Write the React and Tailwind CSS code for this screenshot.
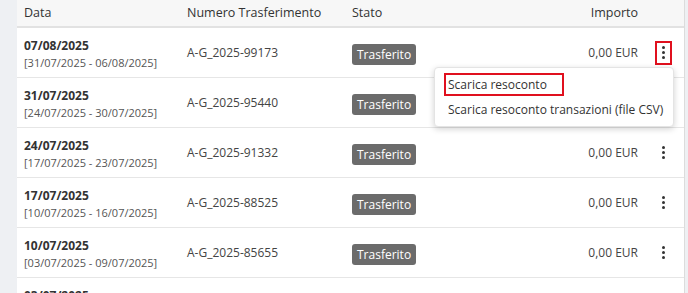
const rows = [
  { date: "07/08/2025", range: "[31/07/2025 - 06/08/2025]", num: "A-G_2025-99173", open: true },
  { date: "31/07/2025", range: "[24/07/2025 - 30/07/2025]", num: "A-G_2025-95440" },
  { date: "24/07/2025", range: "[17/07/2025 - 23/07/2025]", num: "A-G_2025-91332" },
  { date: "17/07/2025", range: "[10/07/2025 - 16/07/2025]", num: "A-G_2025-88525" },
  { date: "10/07/2025", range: "[03/07/2025 - 09/07/2025]", num: "A-G_2025-85655" },
  { date: "03/07/2025", range: "[26/06/2025 - 02/07/2025]", num: "A-G_2025-82011" },
];

function Kebab({ active }) {
  return (
    <div
      className={
        "flex h-[24px] w-[17px] flex-col items-center justify-center gap-[2px] " +
        (active ? "border-2 border-[#e0101e]" : "border-2 border-transparent")
      }
    >
      <span className="h-[3px] w-[3px] rounded-full bg-[#333]" />
      <span className="h-[3px] w-[3px] rounded-full bg-[#333]" />
      <span className="h-[3px] w-[3px] rounded-full bg-[#333]" />
    </div>
  );
}

export default function App() {
  return (
    <div
      className="flex h-[293px] w-[688px] overflow-hidden bg-[#eef0f3] text-[#333]"
      style={{ fontFamily: '"Open Sans", "Noto Sans", sans-serif' }}
    >
      <div className="w-[17px] shrink-0 bg-[#eef0f3]" />
      <div className="relative w-[667px] shrink-0 bg-white">
        {/* Header */}
        <div className="flex h-[28px] items-center border-b-2 border-[#e2e2e2] bg-[#f7f7f7] pl-[7px] text-[12.5px]">
          <div className="w-[163px]">Data</div>
          <div className="w-[165px]">Numero Trasferimento</div>
          <div className="flex-1">Stato</div>
          <div className="w-[100px] text-right">Importo</div>
          <div className="w-[46px]" />
        </div>

        {rows.map((r, i) => (
          <div key={i} className="relative flex h-[50px] items-center border-b border-[#e6e6e6] pl-[7px]">
            <div className="w-[163px] pt-[2px]">
              <div className="text-[12px] font-bold leading-[17px]">{r.date}</div>
              <div className="text-[11px] leading-[17px] text-[#555]">{r.range}</div>
            </div>
            <div className="w-[165px] text-[12px] text-[#444]">{r.num}</div>
            <div className="flex-1">
              <span className="inline-block rounded-[3px] bg-[#6b6b6b] px-[5px] py-[2px] text-[12px] leading-[17px] text-white">
                Trasferito
              </span>
            </div>
            <div className="w-[100px] text-right text-[12px] text-[#444]">0,00 EUR</div>
            <div className="flex w-[46px] pl-[17px]">
              <Kebab active={r.open} />
            </div>

            {r.open && (
              <div className="absolute left-[417px] top-[39px] z-10 w-[240px] rounded-[4px] border border-[#e4e4e4] bg-white py-[5px] text-[12px] leading-[17px] text-[#333] shadow-[0_2px_6px_rgba(0,0,0,0.18)]">
                <div className="pl-[9px]">
                  <span className="inline-block border-2 border-[#e0101e] py-[1px] pl-[2px] pr-[15px]">
                    Scarica resoconto
                  </span>
                </div>
                <div className="whitespace-nowrap pl-[13px] pt-[5px] pb-[3px]">Scarica resoconto transazioni (file CSV)</div>
              </div>
            )}
          </div>
        ))}
      </div>
      <div className="w-[1px] shrink-0 bg-[#dcdcdc]" />
      <div className="flex-1 bg-[#eef0f3]" />
    </div>
  );
}
